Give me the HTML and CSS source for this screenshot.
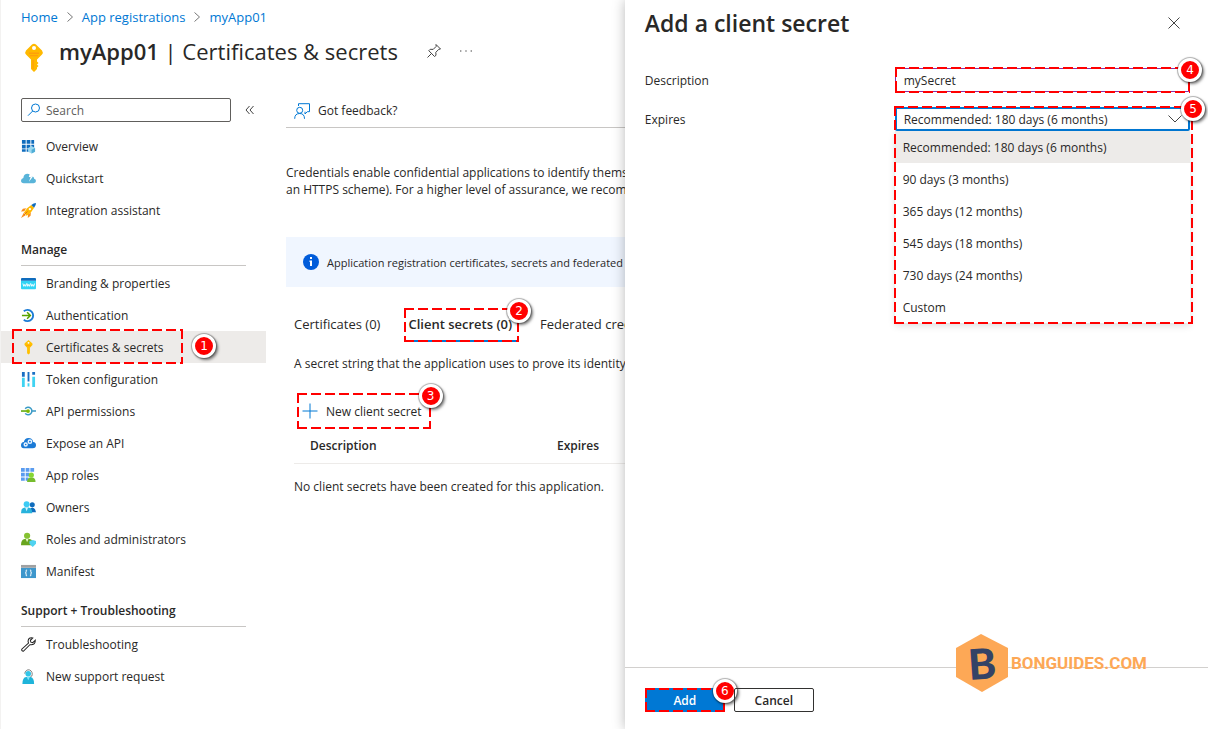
FILE: index.html
```html
<!DOCTYPE html>
<html lang="en">
<head>
    <meta charset="UTF-8">
    <meta name="viewport" content="width=device-width, initial-scale=1.0">
    <title>myApp01 | Certificates &amp; secrets</title>
    <link rel="stylesheet" href="styles.css">
</head>
<body>
    <div class="layout">
        <div class="blade">
            <nav class="breadcrumb" aria-label="Breadcrumb">
                <a href="#">Home</a>
                <svg class="crumb-arrow" viewBox="0 0 8 12"><path d="M1.500 1.500l5 4.500-5 4.500"/></svg>
                <a href="#">App registrations</a>
                <svg class="crumb-arrow" viewBox="0 0 8 12"><path d="M1.500 1.500l5 4.500-5 4.500"/></svg>
                <a href="#">myApp01</a>
            </nav>
            <header class="blade-header">
                <svg class="key-large" viewBox="0 0 20 30">
                    <path fill="#ffb900" d="M8 1.500Q10 0 12 1.500L18 7.500Q19.500 9.500 18 11.500L13 16.500V18.500L14.500 20 13 21.500 14.500 23 13 24.500V26L10 29 7 26V16.500L2 11.500Q.5 9.500 2 7.500Z"/>
                    <path fill="#ff9f0a" d="M5 9.500h10v1.500H5zM6 12h8v1.300H6zM8.500 17h1.200v9H8.500z"/>
                    <circle cx="10" cy="5" r="2" fill="#fff"/>
                </svg>
                <h1><strong>myApp01</strong> | Certificates &amp; secrets</h1>
                <button type="button" class="icon-button pin" aria-label="Pin">
                    <svg viewBox="0 0 16 16"><path d="M10 1.500l4.500 4.500-1.700.3-3 3 .2 3L8.500 13.500 2.800 7.700l1.400-1.400 3 .1 3-3zM5.500 10.500L1.500 14.500"/></svg>
                </button>
                <button type="button" class="icon-button more" aria-label="More">
                    <svg viewBox="0 0 16 16"><path d="M2 8h1.400M7.300 8h1.400M12.600 8H14"/></svg>
                </button>
            </header>
            <div class="blade-body">
                <aside class="sidebar">
                    <div class="search-row">
                        <div class="search">
                            <svg viewBox="0 0 16 16"><circle cx="9.500" cy="6" r="4"/><path d="M6.700 9L2 13.700"/></svg>
                            <input type="text" placeholder="Search" aria-label="Search">
                        </div>
                        <button type="button" class="icon-button collapse" aria-label="Collapse menu">
                            <svg viewBox="0 0 10 10"><path d="M4.500 1L1 5l3.500 4M8.500 1L5 5l3.500 4"/></svg>
                        </button>
                    </div>
                    <ul class="menu">
                        <li><a href="#">
                            <svg viewBox="0 0 16 16"><path fill="#0f6cbd" d="M1 1h4v4H1zM6 1h4v4H6zM11 1h3v4h-3zM1 6h4v4H1zM6 6h4v4H6zM11 6h3v4h-3zM1 11h4v2.500H1zM6 11h4v2.500H6z"/><path fill="#9cd8f0" d="M11.300 7.500l3.700 2v4l-3.700 2-3.700-2v-4z"/><path fill="#50add6" d="M11.300 11.500l3.700-2v4l-3.700 2z"/></svg>
                            Overview</a></li>
                        <li><a href="#">
                            <svg viewBox="0 0 16 16"><path fill="#59b4d9" d="M3 13Q0 13 0 10.500 0 8 2.500 7.500 3 3 7 3q2.500 0 4 2.500 3 0 3 2.700 2 .3 2 2.500Q16 13 13.500 13z"/><path fill="#fff" d="M10 1L8.300 6.500h2L8.500 11.500l4.500-6H11L13 2z"/></svg>
                            Quickstart</a></li>
                        <li><a href="#">
                            <svg viewBox="0 0 16 16"><path fill="#f78d1e" d="M5.500 5.500L2 6 0 9l3.500-.2zM10.500 10l-.3 3.500-3 2.500.3-4zM3 10.500L0 16l5-3z"/><path fill="#ffb900" d="M11 2L14 5 10.500 10 6 13.500 3 10.500 6.500 5.500z"/><path fill="#0f6cbd" d="M11 2Q13.500 0 16 0q0 2.500-2 5z"/><circle cx="9.500" cy="6.500" r="1.300" fill="#fff"/><path stroke="#e8651a" d="M3.500 12.500L7 9"/></svg>
                            Integration assistant</a></li>
                    </ul>
                    <h2>Manage</h2>
                    <ul class="menu">
                        <li><a href="#">
                            <svg viewBox="0 0 16 16"><path fill="#32d4f5" d="M0 5h16v8q0 1-1 1H1q-1 0-1-1z"/><path fill="#0f6cbd" d="M1 2h14q1 0 1 1v2H0V3q0-1 1-1z"/><path fill="none" stroke="#fff" d="M2 8l1 3 1-2 1 2 1-3M6.500 8l.7 3 1-2 1 2 .8-3M10.500 8l1 3 1-2 1 2 1-3"/></svg>
                            Branding &amp; properties</a></li>
                        <li><a href="#">
                            <svg viewBox="0 0 16 16"><path fill="none" stroke="#1c7cd5" stroke-width="2" d="M3 3.500A6 6 0 1 1 3 12.500"/><path fill="none" stroke="#57a300" stroke-width="1.600" d="M1 8h8.500M6.500 4.500L10 8l-3.500 3.500"/></svg>
                            Authentication</a></li>
                        <li class="selected"><a href="#" aria-current="page">
                            <svg viewBox="0 0 16 16"><path fill="#ffc000" d="M8 0l4 3.500q.7 1 0 2L9.500 8.300V14L8 15.500 6.500 14V8.300L4 5.500q-.7-1 0-2z"/><path fill="#ff9f0a" d="M5.500 5.500h5v1h-5z"/><circle cx="8" cy="3" r="1" fill="#fff"/></svg>
                            Certificates &amp; secrets</a>
                            <span class="mark mark-nav"><b class="badge">1</b></span></li>
                        <li><a href="#">
                            <svg viewBox="0 0 16 16"><path fill="#1a6fc4" d="M1 0h3v5H1zM7 0h2v10H7zM12 0h3v3h-3z"/><path fill="#40d3f2" d="M1 6h3v10H1zM7 12h2v3.500H7zM12 5h3v11h-3z"/></svg>
                            Token configuration</a></li>
                        <li><a href="#">
                            <svg viewBox="0 0 16 16"><g fill="none"><path stroke="#3999c6" stroke-width="1.600" d="M4.500 5a4 4 0 1 1 0 5M12 7.500h4"/><path stroke="#57a300" stroke-width="1.600" d="M0 7.500h7"/></g><circle cx="7.500" cy="7.500" r="2" fill="#7fba00"/></svg>
                            API permissions</a></li>
                        <li><a href="#">
                            <svg viewBox="0 0 16 16"><path fill="#1b7ad6" d="M3 13Q0 13 0 9.800 0 7 3 6.500 4 2 8 2q4.300 0 5 4.500 3 .3 3 3.300Q16 13 12.500 13z"/><g fill="none" stroke="#e6f3ff" stroke-width="1.500"><circle cx="9.500" cy="6" r="1.800"/><circle cx="5" cy="9" r="1.600"/></g></svg>
                            Expose an API</a></li>
                        <li><a href="#">
                            <svg viewBox="0 0 16 16"><path fill="#5a9cf0" d="M0 0h4v4H0zM5 0h4v4H5zM10 0h4v4h-4zM0 5h4v4H0zM5 5h4v4H5zM0 10h4v3.500H0zM5 10h3v3.500H5z"/><path fill="#76bc2d" d="M6.500 15q0-4.500 3-5h3q3 .5 3 5z"/><circle cx="11" cy="7.500" r="2.800" fill="#86d633"/></svg>
                            App roles</a></li>
                        <li><a href="#">
                            <svg viewBox="0 0 16 16"><circle cx="12" cy="5" r="2.700" fill="#0f6cbd"/><path fill="#0f6cbd" d="M9 13q0-5 3-5t4 5z"/><circle cx="6" cy="4.500" r="3.200" fill="#3ccbf4"/><path fill="#28b2dc" d="M0 14q0-6 4-6h4q4 0 4 6z"/><path fill="#d5f6ff" d="M4.500 8L6 12l1.500-4z"/></svg>
                            Owners</a></li>
                        <li><a href="#">
                            <svg viewBox="0 0 16 16"><circle cx="6.500" cy="4" r="3.300" fill="#86c232"/><path fill="#69a51e" d="M0 14q0-6 4-6.500h5q4 .5 4 6.500z"/><path fill="#e7f8ce" d="M5 7.500L6.500 11 8 7.500z"/><path fill="#50d2f0" d="M9 9.500l3.500-1 3.500 1v3L12.500 16 9 12.500z"/></svg>
                            Roles and administrators</a></li>
                        <li><a href="#">
                            <svg viewBox="0 0 16 16"><path fill="#3e97cc" d="M0 4h16v11H0z"/><path fill="#a0a1a2" d="M0 1h16v3H0z"/><path fill="none" stroke="#fff" d="M6.500 6.500h-1V9l-1 .5 1 .5v2.500h1M9.500 6.500h1V9l1 .5-1 .5v2.500h-1"/></svg>
                            Manifest</a></li>
                    </ul>
                    <h2>Support + Troubleshooting</h2>
                    <ul class="menu">
                        <li><a href="#">
                            <svg viewBox="0 0 16 16"><path fill="none" stroke="#222" stroke-width="1.100" d="M12.500 1Q8 0 7.500 4.500L8 6.500.8 13Q.5 15 2.500 15.200L9.500 8.200Q14 9 15 5.500L15.200 3.500 12.500 6 10.500 5.500 10 3.500z"/></svg>
                            Troubleshooting</a></li>
                        <li><a href="#">
                            <svg viewBox="0 0 16 16"><path fill="none" stroke="#777" d="M4 5a4 4.500 0 1 1 7.500 2.500L9.500 9"/><circle cx="7.700" cy="5" r="3" fill="#32c5e8"/><path fill="#1fb4da" d="M1.500 16q0-7 4-7.500h4.500q4 .5 4 7.500z"/><path fill="#7fe3f7" d="M6 8.500L7.700 12l1.800-3.500z"/></svg>
                            New support request</a></li>
                    </ul>
                </aside>
                <main class="content">
                    <div class="toolbar">
                        <button type="button" class="command">
                            <svg viewBox="0 0 16 16"><path d="M4.500 3V.7h11v8h-2.200L11 11V8.700M.7 15.800q0-5.300 5-5.300 4.800 0 4.800 5.300"/><circle cx="5.700" cy="7.300" r="3"/></svg>
                            Got feedback?
                        </button>
                    </div>
                    <p class="intro">Credentials enable confidential applications to identify themselves<br>an HTTPS scheme). For a higher level of assurance, we recommend</p>
                    <div class="banner">
                        <svg viewBox="0 0 16 16"><circle cx="8" cy="8" r="8" fill="#015cda"/><path fill="#fff" d="M7 3h2v2H7zM6.500 6.500H9V12H7V8h-.5z"/></svg>
                        Application registration certificates, secrets and federated credentials
                    </div>
                    <div class="tabs" role="tablist">
                        <button type="button" role="tab" class="tab">Certificates (0)</button>
                        <button type="button" role="tab" class="tab active" aria-selected="true">Client secrets (0)<span class="mark mark-tab"><b class="badge">2</b></span></button>
                        <button type="button" role="tab" class="tab">Federated credentials (0)</button>
                    </div>
                    <div class="tab-panel">
                        <p class="hint">A secret string that the application uses to prove its identity</p>
                        <button type="button" class="command add-secret">
                            <svg viewBox="0 0 16 16"><path d="M8 .5v15M.5 8h15"/></svg>
                            New client secret
                            <span class="mark mark-command"><b class="badge">3</b></span>
                        </button>
                        <table class="secrets">
                            <thead>
                                <tr><th class="col-description">Description</th><th>Expires</th></tr>
                            </thead>
                            <tbody>
                                <tr><td colspan="2">No client secrets have been created for this application.</td></tr>
                            </tbody>
                        </table>
                    </div>
                </main>
            </div>
        </div>

        <form class="panel">
            <header class="panel-header">
                <h2>Add a client secret</h2>
                <button type="button" class="icon-button close" aria-label="Close">
                    <svg viewBox="0 0 12 12"><path d="M.5.5l11 11M11.500.5l-11 11"/></svg>
                </button>
            </header>
            <div class="fields">
                <label for="description">Description</label>
                <div class="control">
                    <input type="text" id="description" value="mySecret">
                    <span class="mark mark-input"><b class="badge">4</b></span>
                </div>
                <label for="expires">Expires</label>
                <div class="control">
                    <select id="expires">
                        <option>Recommended: 180 days (6 months)</option>
                        <option>90 days (3 months)</option>
                        <option>365 days (12 months)</option>
                        <option>545 days (18 months)</option>
                        <option>730 days (24 months)</option>
                        <option>Custom</option>
                    </select>
                    <svg class="chevron" viewBox="0 0 14 8"><path d="M.5.5L7 7 13.500.5"/></svg>
                    <ul class="dropdown" role="listbox" aria-label="Expires">
                        <li role="option" aria-selected="true" class="current">Recommended: 180 days (6 months)</li>
                        <li role="option">90 days (3 months)</li>
                        <li role="option">365 days (12 months)</li>
                        <li role="option">545 days (18 months)</li>
                        <li role="option">730 days (24 months)</li>
                        <li role="option">Custom</li>
                    </ul>
                    <span class="mark mark-list"><b class="badge">5</b></span>
                </div>
            </div>
            <footer class="panel-footer">
                <button type="button" class="button primary">Add<span class="mark"><b class="badge">6</b></span></button>
                <button type="button" class="button">Cancel</button>
            </footer>
            <div class="watermark">
                <svg viewBox="0 0 52 58">
                    <path fill="#fda856" d="M25 0L52 14V43L26 58 0 43V14z"/>
                    <text x="26" y="45" text-anchor="middle" transform="rotate(-4 26 29)">B</text>
                </svg>
                <span>BONGUIDES.COM</span>
            </div>
        </form>
    </div>
</body>
</html>
```

FILE: styles.css
```css
* {
    box-sizing: border-box;
}

body {
    margin: 0;
    font-family: "Open Sans", "Noto Sans", sans-serif;
    font-size: 12px;
    line-height: 17px;
    color: #292827;
    background-color: #fff;
}

h1, h2, p, ul {
    margin: 0;
    padding: 0;
}

ul {
    list-style: none;
}

a {
    color: #0078d4;
    text-decoration: none;
}

button, input, select {
    font: inherit;
    color: inherit;
}

button {
    padding: 0;
    border: none;
    background: none;
    cursor: pointer;
}

svg {
    display: block;
    flex: none;
}

.layout {
    display: grid;
    grid-template-columns: 15fr 14fr;
    min-height: 100vh;
}

/* left blade */
.blade {
    min-width: 0;
    overflow: hidden;
    border-left: 1px solid #f3f2f1;
}

.breadcrumb {
    display: flex;
    align-items: center;
    gap: 8px;
    height: 34px;
    padding-left: 20px;
    font-size: 13px;
}

.crumb-arrow {
    width: 8px;
    height: 12px;
    fill: none;
    stroke: #777;
}

.blade-header {
    display: flex;
    align-items: center;
    height: 34px;
    padding-left: 23px;
    white-space: nowrap;
}

.key-large {
    width: 20px;
    height: 30px;
    margin-top: 14px;
}

.blade-header h1 {
    margin-left: 15px;
    font-size: 22px;
    line-height: 32px;
    font-weight: 400;
}

.blade-header strong {
    font-weight: 600;
}

.icon-button svg {
    fill: none;
    stroke: #444;
}

.pin {
    margin-left: 28px;
}

.more {
    margin-left: 16px;
}

.pin svg, .more svg {
    width: 16px;
    height: 16px;
}

.blade-body {
    display: flex;
    padding-top: 26px;
}

.sidebar {
    flex: none;
    width: 265px;
}

.search-row {
    display: flex;
    align-items: center;
    gap: 14px;
    margin: 4px 0 8px 20px;
}

.search {
    display: flex;
    align-items: center;
    gap: 4px;
    width: 210px;
    height: 24px;
    padding-left: 4px;
    border: 1px solid #605e5c;
    border-radius: 2px;
}

.search svg {
    width: 16px;
    height: 16px;
    fill: none;
    stroke: #0078d4;
}

.search input {
    width: 100%;
    min-width: 0;
    padding: 0;
    border: none;
    outline: none;
    background: none;
}

.search input::placeholder {
    color: #605e5c;
}

.collapse svg {
    width: 10px;
    height: 10px;
}

.sidebar h2 {
    margin: 13px 20px 1px;
    padding-bottom: 4px;
    border-bottom: 1px solid #c8c6c4;
    font-size: 12px;
    line-height: 22px;
    font-weight: 600;
}

.menu li {
    position: relative;
}

.menu a {
    display: flex;
    align-items: center;
    gap: 10px;
    height: 32px;
    padding-left: 20px;
    color: inherit;
}

.menu svg {
    width: 15px;
    height: 15px;
}

.menu .selected {
    background-color: #edebe9;
}

/* right part of the blade */
.content {
    flex: 1;
    min-width: 0;
    padding-left: 20px;
    white-space: nowrap;
}

.toolbar {
    padding: 8px;
    border-bottom: 1px solid #c8c6c4;
}

.command {
    position: relative;
    display: flex;
    align-items: center;
    gap: 8px;
}

.command svg {
    width: 16px;
    height: 16px;
    fill: none;
    stroke: #0078d4;
}

.intro {
    margin-top: 36px;
}

.banner {
    display: flex;
    align-items: center;
    gap: 8px;
    height: 50px;
    margin-top: 39px;
    padding-left: 17px;
    background-color: #f0f6ff;
    font-size: 11px;
}

.banner svg {
    width: 16px;
    height: 16px;
}

.tabs {
    display: flex;
    gap: 20px;
    margin-top: 21px;
    padding-left: 4px;
}

.tab {
    position: relative;
    height: 34px;
    padding: 0 4px;
    border-bottom: 2px solid transparent;
    font-size: 13px;
}

.tab.active {
    border-color: #0078d4;
    font-weight: 600;
}

.tab-panel {
    padding-left: 8px;
}

.hint {
    margin-top: 13px;
}

.add-secret {
    height: 36px;
    margin: 21px 0 0 8px;
}

.secrets {
    width: 100%;
    border-collapse: collapse;
    text-align: left;
}

.secrets th {
    height: 34px;
    padding: 0 16px;
    border-bottom: 1px solid #edebe9;
    font-weight: 600;
}

.secrets td {
    height: 46px;
    padding: 0;
}

.col-description {
    width: 247px;
}

/* panel */
.panel {
    position: relative;
    display: flex;
    flex-direction: column;
    min-width: 0;
    background-color: #fff;
    box-shadow: 0 0 12px rgba(0, 0, 0, 0.28);
}

.panel-header {
    display: flex;
    align-items: center;
    justify-content: space-between;
    height: 45px;
    padding: 0 28px 0 20px;
}

.panel-header h2 {
    font-size: 23px;
    line-height: 32px;
    font-weight: 600;
}

.close svg {
    width: 12px;
    height: 12px;
}

.fields {
    flex: 1;
    display: grid;
    grid-template-columns: 11fr 13fr;
    align-content: start;
    align-items: center;
    row-gap: 15px;
    padding: 23px 18px 0 20px;
}

.control {
    position: relative;
}

.control input, .control select {
    display: block;
    width: 100%;
    height: 24px;
    padding: 0 8px;
    border: 1px solid #8a2da5;
    border-radius: 2px;
    outline: none;
    background-color: #fff;
}

.control select {
    appearance: none;
    border: 2px solid #0078d4;
    padding: 0 7px;
}

.chevron {
    position: absolute;
    top: 8px;
    right: 8px;
    width: 14px;
    height: 8px;
    fill: none;
    stroke: #444;
}

.dropdown {
    position: absolute;
    top: 100%;
    left: 0;
    right: 0;
    background-color: #fff;
    box-shadow: 0 3px 7px rgba(0, 0, 0, 0.13);
}

.dropdown li {
    height: 32px;
    padding: 0 8px;
    line-height: 34px;
}

.dropdown .current {
    background-color: #edebe9;
}

.panel-footer {
    display: flex;
    gap: 9px;
    height: 62px;
    padding: 20px 20px 0;
    border-top: 1px solid #d2d0ce;
}

.button {
    position: relative;
    width: 80px;
    height: 24px;
    border: 1px solid #323130;
    border-radius: 2px;
    font-weight: 600;
}

.button.primary {
    border-color: #0078d4;
    background-color: #0078d4;
    color: #fff;
}

/* dashed frames with a step number */
.mark {
    position: absolute;
    inset: -1px;
    pointer-events: none;
    background:
        repeating-linear-gradient(90deg, #f00 0 10px, transparent 10px 14px) top / 100% 2px no-repeat,
        repeating-linear-gradient(90deg, #f00 0 10px, transparent 10px 14px) bottom / 100% 2px no-repeat,
        repeating-linear-gradient(#f00 0 10px, transparent 10px 14px) left / 2px 100% no-repeat,
        repeating-linear-gradient(#f00 0 10px, transparent 10px 14px) right / 2px 100% no-repeat;
}

.mark-nav {
    inset: -2px 83px -1px 11px;
}

.mark-tab {
    inset: 0 -3px -2px 0;
}

.mark-command {
    inset: 0 -9px 0 -5px;
}

.mark-input {
    inset: -1px 0;
}

.mark-list {
    bottom: -193px;
    right: -3px;
}

.badge {
    position: absolute;
    top: -9px;
    right: -12px;
    width: 24px;
    height: 24px;
    border: 3px solid #fff;
    border-radius: 50%;
    background-color: #f00;
    box-shadow: 0 0 1px 1px rgba(0, 0, 0, 0.3), 2px 2px 3px rgba(0, 0, 0, 0.5);
    color: #fff;
    font: 12px/18px "DejaVu Sans", sans-serif;
    text-align: center;
}

.mark-nav .badge {
    top: 5px;
    right: -33px;
}

.watermark {
    position: absolute;
    right: 61px;
    bottom: 37px;
    display: flex;
    align-items: center;
    gap: 3px;
    color: #fda856;
    font: bold 17px/24px Roboto, "Liberation Sans", sans-serif;
}

.watermark svg {
    width: 52px;
    height: 58px;
}

.watermark text {
    fill: #344266;
    font: 900 42px Lato, sans-serif;
}
```
